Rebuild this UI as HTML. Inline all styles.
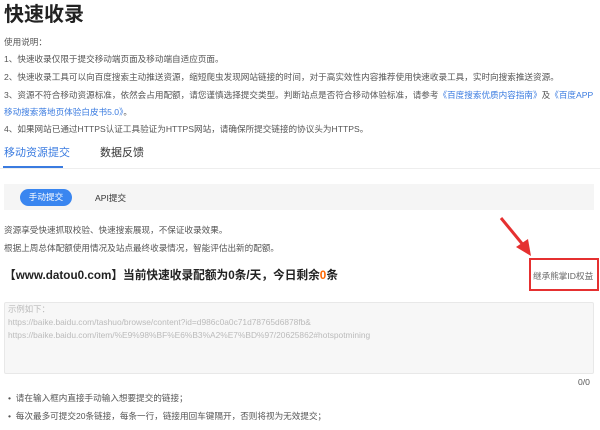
<!DOCTYPE html>
<html><head><meta charset="utf-8"><style>
*{margin:0;padding:0;box-sizing:border-box}
body{width:600px;height:430px;overflow:hidden;background:#fff;font-family:"Liberation Sans","Noto Sans CJK SC",sans-serif;color:#555;font-size:8.6px;position:relative}
.a{position:absolute;white-space:nowrap;line-height:12px}
.blue{color:#3a7be0}
</style></head><body>
<div class="a" style="left:4px;top:3px;font-size:20px;line-height:24px;font-weight:bold;color:#222">快速收录</div>
<div class="a" style="left:4px;top:36px">使用说明：</div>
<div class="a" style="left:4px;top:53px">1、快速收录仅限于提交移动端页面及移动端自适应页面。</div>
<div class="a" style="left:4px;top:71px">2、快速收录工具可以向百度搜索主动推送资源，缩短爬虫发现网站链接的时间，对于高实效性内容推荐使用快速收录工具，实时向搜索推送资源。</div>
<div class="a" style="left:4px;top:89px">3、资源不符合移动资源标准，依然会占用配额，请您谨慎选择提交类型。判断站点是否符合移动体验标准，请参考<span class="blue">《百度搜索优质内容指南》</span>及<span class="blue">《百度APP</span></div>
<div class="a blue" style="left:4px;top:106px">移动搜索落地页体验白皮书5.0》<span style="color:#555">。</span></div>
<div class="a" style="left:4px;top:123px">4、如果网站已通过HTTPS认证工具验证为HTTPS网站，请确保所提交链接的协议头为HTTPS。</div>
<div class="a" style="left:4px;top:146px;font-size:11px;line-height:14px;color:#3a7be0">移动资源提交</div>
<div class="a" style="left:100px;top:146px;font-size:11px;line-height:14px;color:#333">数据反馈</div>
<div style="position:absolute;left:0;top:168px;width:600px;height:1px;background:#eee"></div>
<div style="position:absolute;left:3px;top:166px;width:60px;height:2px;background:#3a7be0"></div>
<div style="position:absolute;left:4px;top:184px;width:590px;height:26px;background:#f5f5f5"></div>
<div style="position:absolute;left:20px;top:189px;width:52px;height:17px;border-radius:9px;background:#3a86f0;color:#fff;text-align:center;line-height:17px">手动提交</div>
<div class="a" style="left:95px;top:192px;color:#333">API提交</div>
<div class="a" style="left:4px;top:224px">资源享受快速抓取校验、快速搜索展现，不保证收录效果。</div>
<div class="a" style="left:4px;top:242px">根据上周总体配额使用情况及站点最终收录情况，智能评估出新的配额。</div>
<div class="a" style="left:4px;top:268px;font-size:11.7px;line-height:15px;font-weight:bold;color:#222">【www.datou0.com】当前快速收录配额为0条/天，今日剩余<span style="color:#f60">0</span>条</div>
<div class="a" style="left:533px;top:270px;color:#666">继承熊掌ID权益</div>
<div style="position:absolute;left:529px;top:258px;width:70px;height:33px;border:2px solid #e53030"></div>
<svg style="position:absolute;left:0;top:0" width="600" height="430"><line x1="501" y1="218" x2="524" y2="246" stroke="#e53030" stroke-width="3"/><polygon points="531,256 516,247 528,239" fill="#e53030"/></svg>
<div style="position:absolute;left:4px;top:302px;width:590px;height:72px;background:#f7f7f7;border:1px solid #e8e8e8;border-radius:2px"></div>
<div class="a" style="left:8px;top:303px;color:#bbb;font-size:8.4px;line-height:13px">示例如下：<br>https://baike.baidu.com/tashuo/browse/content?id=d986c0a0c71d78765d6878fb&amp;<br>https://baike.baidu.com/item/%E9%98%BF%E6%B3%A2%E7%BD%97/20625862#hotspotmining</div>
<div class="a" style="left:578px;top:376px;color:#555">0/0</div>
<div class="a" style="left:8px;top:392px">•&nbsp; 请在输入框内直接手动输入想要提交的链接；</div>
<div class="a" style="left:8px;top:410px">•&nbsp; 每次最多可提交20条链接，每条一行，链接用回车键隔开，否则将视为无效提交；</div>
</body></html>
